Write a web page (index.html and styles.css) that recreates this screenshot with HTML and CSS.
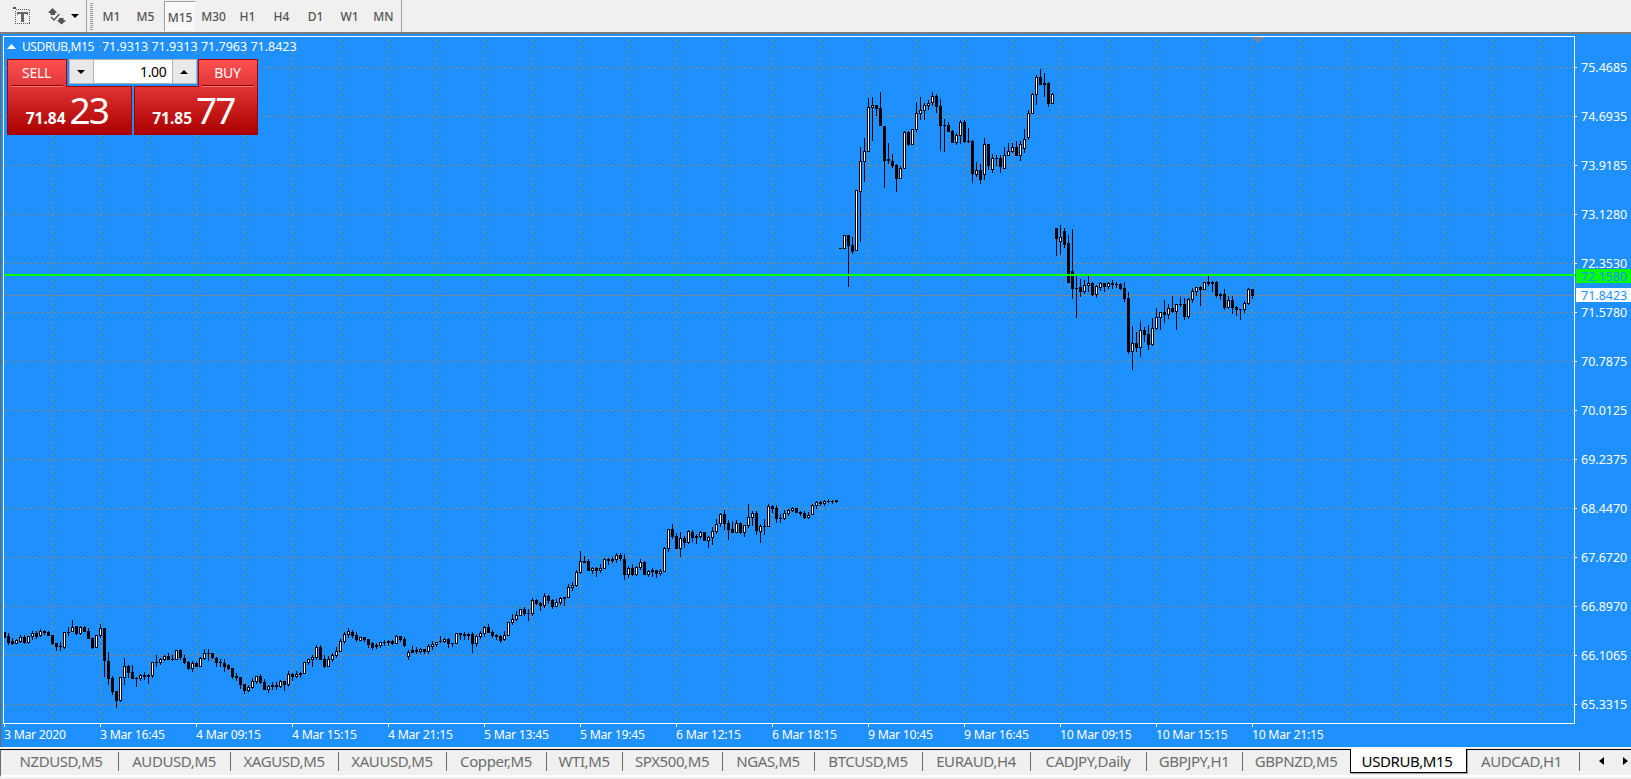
FILE: index.html
```html
<!DOCTYPE html>
<html lang="en">
<head>
	<meta charset="UTF-8">
	<title>USDRUB,M15</title>
	<link rel="stylesheet" href="styles.css">
</head>
<body>

<header class="toolbar">
	<div class="tools">
		<svg class="icon-text" width="18" height="18" viewBox="0 0 18 18" shape-rendering="crispEdges">
			<rect x="2.5" y="2.5" width="14" height="14" fill="none" stroke="#555" stroke-dasharray="1 1"/>
			<rect x="0" y="0" width="3" height="2" fill="#555"/>
			<path d="M4 5h11v3h-1v-1h-3v8h-3v-8h-3v1h-1z" fill="#666"/>
		</svg>
		<svg class="icon-arrows" width="18" height="17" viewBox="0 0 18 17">
			<path d="M4.500 0l4.500 4.500-2 .8v1.700h-4.500v-1.700l-2.500-.8z" fill="#555"/>
			<path d="M13.500 16.500l-4.500-4 2-.8v-1.700h4.500v1.700l2.500.8z" fill="#555"/>
			<path d="M3 9l3 3 5.500-6" fill="none" stroke="#555" stroke-width="1.500"/>
		</svg>
		<svg width="8" height="4" viewBox="0 0 8 4"><path d="M0 0h8l-4 4z"/></svg>
	</div>
	<div class="grip"></div>
	<nav class="timeframes">
		<span>M1</span>
		<span>M5</span>
		<span class="pressed">M15</span>
		<span>M30</span>
		<span>H1</span>
		<span>H4</span>
		<span>D1</span>
		<span>W1</span>
		<span>MN</span>
	</nav>
</header>

<main class="chart">
	<div class="plot">
		<svg id="candles" width="1572" height="688" viewBox="3 36 1572 688" shape-rendering="crispEdges"></svg>
		<div class="overlay">
			<div class="title">
				<svg width="9" height="5" viewBox="0 0 9 5"><path d="M4.500 0l4.500 5h-9z" fill="#fff"/></svg>
				<span class="symbol">USDRUB,M15</span>
				<span>71.9313 71.9313 71.7963 71.8423</span>
			</div>
			<div class="trade">
				<div class="trade-top">
					<button class="side">SELL</button>
					<div class="volume">
						<span class="step"><svg width="8" height="4" viewBox="0 0 8 4"><path d="M0 0h8l-4 4z"/></svg></span>
						<span class="lots">1.00</span>
						<span class="step"><svg width="8" height="4" viewBox="0 0 8 4"><path d="M4 0l4 4h-8z"/></svg></span>
					</div>
					<button class="side">BUY</button>
				</div>
				<div class="trade-prices">
					<div class="price"><b>71.84</b><span>23</span></div>
					<div class="price"><b>71.85</b><span>77</span></div>
				</div>
			</div>
		</div>
	</div>
	<div class="price-axis" id="price-axis">
		<span class="tag level">72.1580</span>
		<span class="tag bid">71.8423</span>
	</div>
	<div class="time-axis" id="time-axis"></div>
</main>

<footer class="tabs">
	<span>NZDUSD,M5</span>
	<span>AUDUSD,M5</span>
	<span>XAGUSD,M5</span>
	<span>XAUUSD,M5</span>
	<span>Copper,M5</span>
	<span>WTI,M5</span>
	<span>SPX500,M5</span>
	<span>NGAS,M5</span>
	<span>BTCUSD,M5</span>
	<span>EURAUD,H4</span>
	<span>CADJPY,Daily</span>
	<span>GBPJPY,H1</span>
	<span>GBPNZD,M5</span>
	<span class="active">USDRUB,M15</span>
	<span>AUDCAD,H1</span>
	<div class="scroll">
		<svg width="5" height="8" viewBox="0 0 5 8"><path d="M5 0v8l-5-4z"/></svg>
		<svg width="5" height="8" viewBox="0 0 5 8"><path d="M0 0v8l5-4z"/></svg>
	</div>
</footer>

<script src="chart.js"></script>
</body>
</html>
```
FILE: styles.css
```css
:root {
	--chart-blue: #1e90ff;
	--face: #f0f0f0;
	--row: 49px;
	--column: 96px;
}

* {
	box-sizing: border-box;
}

body {
	margin: 0;
	width: 1631px;
	height: 779px;
	overflow: hidden;
	background-color: var(--face);
	font-family: "Noto Sans", "Open Sans", sans-serif;
	font-size: 12.5px;
}

svg {
	display: block;
	flex: none;
}

/* toolbar */
.toolbar {
	display: flex;
	height: 34px;
	border-bottom: 2px solid #7d7d7d;
}

.tools {
	display: flex;
	align-items: center;
	width: 87px;
	padding-left: 13px;
	border-right: 1px solid #a0a0a0;
}

.icon-arrows {
	margin-left: 17px;
	margin-right: 5px;
}

.grip {
	width: 3px;
	margin: 3px 1px 2px 3px;
	background: repeating-linear-gradient(#9a9a9a 0 1px, var(--face) 1px 2px);
}

.timeframes {
	display: flex;
	width: 308px;
	border-right: 1px solid #a0a0a0;
}

.timeframes span {
	width: 34px;
	height: 30px;
	padding-left: 1px;
	line-height: 34px;
	text-align: center;
	color: #555;
	font-size: 12px;
	font-weight: 500;
}

.timeframes .pressed {
	margin: 1px 1px 0 2px;
	padding-left: 0;
	width: 31px;
	line-height: 31px;
	background-color: #f8f8f8;
	border-left: 1px solid #a0a0a0;
	border-top: 1px solid #a0a0a0;
}

/* chart window */
.chart {
	display: grid;
	grid-template-columns: 1572px 1fr;
	grid-template-rows: 688px 1fr;
	height: 713px;
	padding: 2px 0 0 2px;
	border-left: 1px solid #696969;
	background-color: var(--chart-blue);
	color: #fff;
}

.plot {
	position: relative;
}

.overlay {
	position: absolute;
	top: 1px;
	left: 4px;
}

.title {
	display: flex;
	align-items: center;
	height: 18px;
	white-space: pre;
}

.title .symbol {
	margin: 0 8px 0 6px;
	font-size: 12px;
	letter-spacing: -.4px;
}

.trade {
	width: 256px;
	height: 79px;
	padding-top: 4px;
	background-color: var(--chart-blue);
}

.trade-top {
	display: flex;
	width: 251px;
	height: 27px;
	justify-content: space-between;
}

.side {
	position: relative;
	width: 60px;
	height: 28px;
	padding: 0 1px 2px 0;
	border: 1px solid #a80000;
	border-bottom: 0;
	background: linear-gradient(#ff5050, #e03636);
	color: #fff;
	font-family: inherit;
	font-size: 14px;
	letter-spacing: -.3px;
	z-index: 1;
}

/* engraved line under SELL and BUY */
.side::after {
	content: "";
	position: absolute;
	left: 3px;
	right: 3px;
	bottom: 0;
	height: 2px;
	background: linear-gradient(#8b0000 50%, #ff7070 50%);
}

.volume {
	display: flex;
	width: 128px;
	height: 25px;
	border: 1px solid #b4b4b4;
	background-color: #fff;
	color: #000;
}

.step {
	display: flex;
	align-items: center;
	justify-content: center;
	width: 24px;
	background-color: #e8e8e8;
	border-right: 1px solid #b4b4b4;
}

.step:last-child {
	border-right: 0;
	border-left: 1px solid #b4b4b4;
}

.lots {
	flex: 1;
	padding-right: 5px;
	text-align: right;
	font-size: 14px;
	line-height: 23px;
	letter-spacing: -.3px;
}

.trade-prices {
	display: flex;
	gap: 2px;
	height: 49px;
	width: 251px;
}

.price {
	display: flex;
	align-items: baseline;
	justify-content: center;
	flex: 1;
	padding-right: 5px;
	border: 1px solid #a00000;
	background: linear-gradient(#e03434, #ac0000);
	line-height: 46px;
}

.price b {
	font-size: 15.5px;
}

.price span {
	margin-left: 4px;
	font-size: 37px;
	letter-spacing: -2px;
}

/* axes */
.price-axis {
	position: relative;
	padding-top: 7px;
}

.price-axis .mark {
	display: flex;
	align-items: center;
	height: var(--row);
}

.price-axis .mark::before {
	content: "";
	width: 2px;
	height: 1px;
	margin-right: 4px;
	background-color: #fff;
}

.tag {
	position: absolute;
	left: 1px;
	right: 0;
	height: 14px;
	padding-left: 5px;
	line-height: 15px;
	color: var(--chart-blue);
}

.level {
	top: 233px;
	background-color: #0f0;
}

.bid {
	top: 252px;
	background-color: #fff;
}

.time-axis {
	display: flex;
	grid-column: 1 / 3;
	padding-left: 1px;
}

.time-axis span {
	flex: none;
	width: var(--column);
	line-height: 16px;
	white-space: nowrap;
	text-indent: -2px;
	font-size: 12.3px;
	letter-spacing: -.3px;
}

.time-axis span::before {
	content: "";
	display: block;
	width: 1px;
	height: 3px;
	background-color: #fff;
}

/* chart tabs */
.tabs {
	display: grid;
	grid-template-columns: 118px 112px 108px 108px 100px 76px 100px 92px 108px 108px 116px 96px 108px 117px 112px 1fr;
	height: 28px;
	margin-top: 2px;
	border-top: 1px solid #000;
	border-bottom: 2px solid #fff;
	border-left: 1px solid #696969;
	background-color: var(--face);
	box-shadow: 0 -2px #f4f4f4;
}

.tabs span {
	position: relative;
	height: 24px;
	padding-right: 2px;
	line-height: 23px;
	text-align: center;
	color: #6d6d6d;
	font-size: 15px;
	letter-spacing: -.4px;
}

.tabs span:first-child {
	padding-left: 4px;
}

.tabs span:nth-child(15) {
	padding-right: 5px;
}

.tabs span::after {
	content: "";
	position: absolute;
	top: 2px;
	right: 0;
	width: 1px;
	height: 19px;
	background-color: #696969;
}

.tabs .active {
	margin: -1px 1px 0 -1px;
	padding-right: 3px;
	background-color: #fff;
	border: 1px solid #000;
	border-top: 0;
	box-shadow: 1px 1px #a0a0a0;
	line-height: 25px;
	color: #000;
}

.tabs .active::after {
	display: none;
}

.scroll {
	display: flex;
	gap: 19px;
	align-items: center;
	height: 22px;
	padding-left: 19px;
}
```
FILE: chart.js
```js
var SVG = 'http://www.w3.org/2000/svg';
var plot = document.querySelector('#candles');

// high, open, close, low of every bar, in chart rows
var bars = `
632,632,637,637 633,636,642,644 638,641,643,644 639,643,640,643 635,641,637,642 635,637,642,643 636,642,636,643 631,636,633,639
631,633,636,638 629,635,631,636 630,631,632,634 631,632,635,635 635,635,643,644 643,643,646,650 642,646,646,650 632,647,632,648
627,632,632,635 620,631,627,631 626,626,633,634 626,633,627,634 626,627,631,631 628,631,638,638 637,638,647,648 635,647,635,647
624,635,628,637 628,628,660,676 652,661,678,684 676,678,691,694 691,691,700,707 677,700,677,701 658,677,666,684 665,666,672,677
665,672,678,678 677,678,678,686 674,678,675,680 672,675,676,679 674,675,676,683 662,675,662,677 655,662,662,666 658,662,659,664
655,659,656,660 653,656,659,659 655,659,659,660 650,659,650,659 649,650,657,659 655,658,662,663 661,662,668,669 661,668,663,671
662,663,666,666 657,666,658,666 649,658,653,659 649,653,653,660 653,653,657,658 657,658,662,666 659,662,662,666 659,663,666,671
664,665,668,669 668,668,676,678 673,676,677,680 677,677,684,688 684,684,690,693 685,690,687,691 678,687,681,688 676,681,676,683
674,676,682,683 679,682,689,689 685,689,686,692 682,685,686,689 682,685,686,689 680,686,681,687 681,681,684,690 671,684,674,686
673,674,676,680 671,676,674,677 672,673,674,677 662,673,662,673 659,662,659,664 655,659,657,666 645,657,647,659 645,647,659,659
655,659,666,667 656,666,659,666 653,659,655,661 647,655,651,657 639,651,641,651 632,641,634,643 628,634,631,637 630,632,635,637
632,635,639,641 637,640,637,640 637,637,639,641 639,639,644,647 642,643,647,649 643,645,646,648 642,645,642,647 640,642,642,645
640,641,642,645 640,641,643,644 635,643,636,643 636,636,639,641 637,639,645,646 650,656,652,659 646,650,652,652 647,650,651,653
648,651,649,653 649,649,651,653 644,651,646,653 641,646,644,649 642,644,642,646 636,641,641,642 638,641,639,642 638,639,643,647
643,643,643,646 633,643,633,643 633,633,634,639 632,634,635,639 633,634,635,639 632,634,643,652 635,643,636,646 631,636,633,638
626,633,627,636 624,627,632,632 630,632,635,637 634,635,636,639 635,636,640,642 631,639,635,640 622,635,622,635 614,622,619,624
611,619,615,620 609,615,609,615 607,609,613,615 609,613,613,620 598,613,600,615 599,600,603,604 602,603,605,610 593,605,596,607
595,596,600,603 599,600,606,608 599,606,602,606 597,602,598,604 597,597,598,605 584,597,587,597 582,587,585,590 570,585,572,586
551,572,561,573 556,561,562,562 559,561,570,570 567,570,568,573 567,568,570,576 564,570,568,572 558,568,559,568 558,559,560,564
557,559,560,562 553,559,555,562 553,555,558,560 554,559,574,579 566,574,568,577 564,568,574,575 566,574,567,575 559,567,562,569
561,562,574,574 570,574,571,576 568,570,571,576 570,570,573,577 569,573,571,575 547,571,548,571 529,548,529,551 524,529,536,538
533,536,548,548 532,548,538,556 536,538,542,547 530,542,531,543 530,532,537,541 534,536,537,543 531,536,532,538 532,532,540,540
536,540,537,547 527,537,531,544 519,531,524,533 513,523,514,526 510,514,523,529 520,523,529,539 521,529,532,532 520,532,523,532
522,523,532,533 525,532,525,536 504,525,517,527 511,517,513,525 511,513,530,534 524,531,526,542 519,526,526,534 504,526,506,526
505,506,508,512 505,508,518,522 514,518,518,522 510,518,513,519 509,513,510,515 507,510,508,511 508,508,512,512 511,512,513,515
511,513,517,518 512,517,515,518 504,514,505,514 501,505,502,508 501,502,503,505 500,503,501,505 499,501,501,502 500,501,501,503
500,500,501,502 248,248,248,248 235,248,235,248 235,235,245,286 237,245,251,253 190,250,190,250 147,191,161,241 138,161,151,181
98,151,107,151 97,107,105,140 105,105,108,115 92,108,125,125 126,126,160,187 143,159,160,163 154,161,165,167 164,165,178,191
166,178,168,178 131,168,132,168 131,132,144,145 129,144,129,144 102,129,113,131 97,113,110,119 103,110,105,119 100,105,103,109
92,102,96,105 94,96,106,112 99,106,125,150 119,125,125,151 122,125,131,131 130,131,142,142 133,142,135,144 120,135,122,143
120,122,141,142 128,141,141,142 140,141,173,182 162,174,170,176 164,170,179,183 138,174,144,179 144,144,165,169 154,169,158,172
155,158,158,165 155,158,166,172 147,168,155,168 143,155,151,155 143,151,147,152 141,147,155,155 141,155,144,160 129,148,139,152
110,137,113,139 93,113,94,113 75,94,77,104 69,77,84,84 73,83,84,96 82,83,103,106 93,103,94,103 228,228,238,255
225,241,237,254 228,231,244,247 235,243,282,282 229,271,288,298 275,288,288,317 279,287,291,296 280,291,285,293 276,285,283,291
282,283,294,295 285,294,286,297 282,287,283,290 283,283,286,291 282,286,283,288 280,283,284,288 282,284,284,287 283,284,288,289
282,288,298,301 292,298,351,353 326,351,343,369 332,343,347,351 321,347,330,356 327,330,334,341 325,334,344,349 318,344,328,345
308,328,317,329 312,317,312,329 300,312,314,322 304,314,308,318 296,308,311,312 304,311,304,329 297,304,304,306 298,304,316,319
298,316,299,318 288,299,291,302 287,291,287,295 286,287,289,305 282,289,282,289 275,282,283,285 281,282,283,291 281,282,295,297
293,294,295,299 289,294,307,309 296,307,300,308 296,300,307,313 306,307,309,315 309,309,309,319 301,309,303,312 288,303,289,304
289,289,295,298`;

var prices = ['75.4685', '74.6935', '73.9185', '73.1280', '72.3530', '71.5780', '70.7875', '70.0125', '69.2375', '68.4470', '67.6720', '66.8970', '66.1065', '65.3315'];
var times = ['3 Mar 2020', '3 Mar 16:45', '4 Mar 09:15', '4 Mar 15:15', '4 Mar 21:15', '5 Mar 13:45', '5 Mar 19:45', '6 Mar 12:15', '6 Mar 18:15', '9 Mar 10:45', '9 Mar 16:45', '10 Mar 09:15', '10 Mar 15:15', '10 Mar 21:15'];

function rect(x, y, width, height, fill) {
	var el = document.createElementNS(SVG, 'rect');
	el.setAttribute('x', x);
	el.setAttribute('y', y);
	el.setAttribute('width', width);
	el.setAttribute('height', height);
	el.setAttribute('fill', fill);
	plot.appendChild(el);
}

function path(d, attrs) {
	var el = document.createElementNS(SVG, 'path');
	el.setAttribute('d', d);
	for (var name in attrs) {
		el.setAttribute(name, attrs[name]);
	}
	plot.appendChild(el);
}

// grid
var dashes = { stroke: '#858789', 'stroke-dasharray': '3 3' };
for (var x = 52; x < 1574; x += 48) {
	path('M' + (x + 0.5) + ' 39V723', dashes);
}
for (var y = 67; y < 723; y += 49) {
	path('M5 ' + (y + 0.5) + 'H1574', dashes);
}

path('M1252 37h12l-6 6z', { fill: '#778899' });
rect(4, 295, 1570, 1, '#778899');

// candles
bars.trim().split(/\s+/).forEach(function (bar, i) {
	var v = bar.split(',').map(Number);
	var x = 4 + i * 4;
	var top = Math.min(v[1], v[2]);
	var height = Math.abs(v[1] - v[2]) + 1;
	rect(x, v[0], 1, v[3] - v[0] + 1, '#000');
	rect(x - 1, top, 3, height, '#000');
	if (v[1] > v[2] && height > 2) {
		rect(x, top + 1, 1, height - 2, '#fff');
	}
});

rect(4, 274, 1571, 2, '#00ff00');
path('M3.5 36.5H1574.5V723.5H3.5Z', { fill: 'none', stroke: '#fff' });
rect(1574, 274, 1, 2, '#00ff00');

prices.forEach(function (price) {
	var mark = document.createElement('span');
	mark.className = 'mark';
	mark.textContent = price;
	document.querySelector('#price-axis').appendChild(mark);
});

times.forEach(function (time) {
	var mark = document.createElement('span');
	mark.textContent = time;
	document.querySelector('#time-axis').appendChild(mark);
});
```
